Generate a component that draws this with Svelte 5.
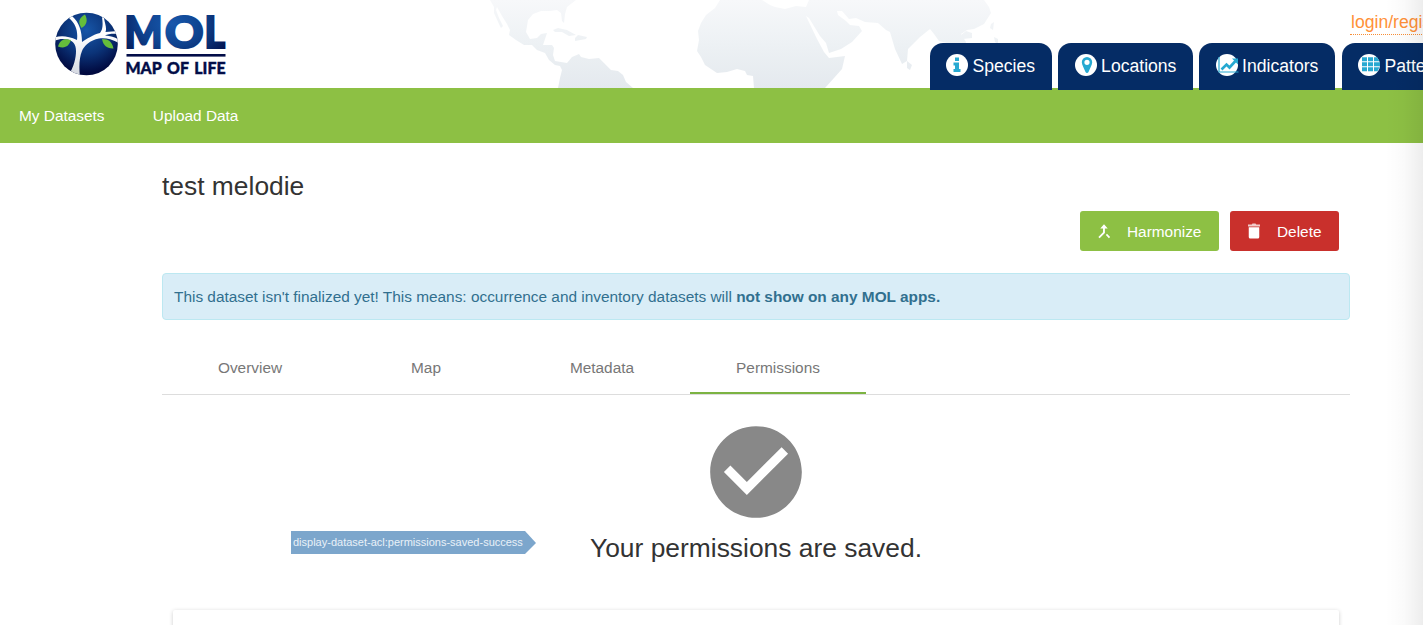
<script>
  const apps = [
    { name: 'Species', icon: 'info', width: 122, gap: 6, inset: 16 },
    { name: 'Locations', icon: 'pin', width: 135, gap: 6, inset: 16.6 },
    { name: 'Indicators', icon: 'chart', width: 136, gap: 7, inset: 16.6 },
    { name: 'Patterns', icon: 'grid', width: 125, gap: 0, inset: 16 }
  ];
  const tabs = ['Overview', 'Map', 'Metadata', 'Permissions'];
  let active = $state('Permissions');
</script>

<div class="page">
  <header>
    <svg class="world" width="520" height="88" viewBox="480 0 520 88" aria-hidden="true">
      <defs>
        <linearGradient id="land" gradientUnits="userSpaceOnUse" x1="0" y1="0" x2="0" y2="88">
          <stop offset="0" stop-color="#f7f8fa" />
          <stop offset=".5" stop-color="#edf1f4" />
          <stop offset="1" stop-color="#e4e9ee" />
        </linearGradient>
      </defs>
      <g fill="url(#land)">
        <path d="M490 0L494 7L494 13L499 24L501 28L503 26L499 18L496 10L497 7L502 16L507 24L510 30L509 35L516 40L524 45L532 45L537 50L545 53L549 60L555 65L560 66L562 70L560 78L558 88H633L626 82L623 75L618 71L611 70L604 63L599 58L589 59L581 57L579 54L572 57L567 63L561 62L555 61L553 55L554 48L552 45L543 45L547 33L541 34L537 38L530 39L526 32L528 20L533 14L541 11L550 11L557 10L561 13L562 21L564 23L565 14L567 7L576 0Z" />
        <path d="M553 30L558 28L567 30L576 35L569 36L562 32L555 32ZM575 38L578 35L587 37L586 39L575 41Z" />
        <path d="M720 0L715 8L706 15L701 23L698 31L699 40L697 51L701 57L705 65L717 73L727 72L737 69L745 71L747 75L753 76L754 88H825L834 78L842 69L845 56L829 58L824 52L817 39L806 16L809 18L820 36L826 43L829 53L841 49L852 42L862 31L859 26L850 25L846 21L838 15L837 11L842 11L849 19L856 18L865 22L878 23L886 30L890 32L895 49L902 64L907 61L908 49L920 37L930 29L934 34L939 41L947 43L958 50L964 50L966 42L961 34L967 30L974 29L984 24L991 13L989 7L984 0H809L806 7L796 6L785 9L775 7L770 5L762 0Z" />
        <path d="M907 61L912 65L910 70L907 68ZM961 35L966 31L972 33L972 38L963 39ZM991 24L994 22L993 30L990 28ZM994 37L998 39L998 44L995 42Z" />
      </g>
    </svg>

    <svg class="logo" width="178" height="70" viewBox="54 11 178 70" role="img" aria-label="MOL Map of Life">
      <defs>
        <radialGradient id="globe" cx=".5" cy=".28" r=".68">
          <stop offset="0" stop-color="#1756a8" />
          <stop offset=".55" stop-color="#0b3479" />
          <stop offset="1" stop-color="#010a40" />
        </radialGradient>
        <radialGradient id="letters" gradientUnits="userSpaceOnUse" cx="172" cy="24" r="66" gradientTransform="translate(0 7) scale(1 .7)">
          <stop offset="0" stop-color="#1758ad" />
          <stop offset=".5" stop-color="#0e408b" />
          <stop offset="1" stop-color="#02104b" />
        </radialGradient>
        <linearGradient id="bark" x1="0" y1="0" x2="0" y2="1">
          <stop offset=".3" stop-color="#fff" />
          <stop offset="1" stop-color="#d3d7e0" />
        </linearGradient>
        <clipPath id="disc"><circle cx="86.500" cy="44" r="31.300" /></clipPath>
      </defs>
      <circle cx="86.500" cy="44" r="31.300" fill="url(#globe)" />
      <g clip-path="url(#disc)">
        <path fill="url(#bark)" d="M68 76C74 67 76 58 76 51C76 44 73 41 68 39.500C63 38.500 59 38.500 54 41V37.500C60 35.500 68 35.500 77 40C78 31 76 24 69 18L72 16C79 22 82 31 82 42C87 39 92 35 100 33C103 29 103 24 102 17L104 18C105 24 107 28 105.500 32L119 31V34C112 33.500 108 34 105 35.500C111 36 116 37.500 119 40V43C112 39 105 37.500 99 38.500C90 40 84 46 82 51C79 58 79 68 80 77Z" />
      </g>
      <g fill="#65bd3b">
        <path d="M81.500 28C77.500 22 79 18 85 14.500C88 20 87 25 81.500 28Z" />
        <path d="M58 46.500C60 40 64 38 71 40C69 46 65 49 58 46.500Z" />
        <path d="M102 39C109 39 112 42 113.500 48.500C107 49 103 45 102 39Z" />
      </g>
      <g class="mol" fill="url(#letters)" stroke="url(#letters)">
        <text x="124.500" y="48" textLength="38" lengthAdjust="spacingAndGlyphs">M</text>
        <text x="165" y="48" textLength="38.500" lengthAdjust="spacingAndGlyphs">O</text>
        <text x="204.500" y="48" textLength="20.500" lengthAdjust="spacingAndGlyphs">L</text>
      </g>
      <rect x="126.500" y="54" width="99" height="2.600" fill="#020d48" />
      <text class="life" x="125.500" y="73.700" textLength="100" lengthAdjust="spacingAndGlyphs">MAP OF LIFE</text>
    </svg>

    <a class="login" href="#login">login/register</a>

    <nav class="apps">
      {#each apps as app}
        <a href="#{app.icon}" style="width: {app.width}px; margin-right: {app.gap}px; padding-left: {app.inset}px">
          <svg width="24" height="24" viewBox="0 0 24 24">
            <circle cx="11" cy="12" r="11" fill="#fff" />
            {#if app.icon === 'info'}
              <path fill="#27a9d1" d="M9 4.500h4v3.500H9zM7.500 9.500H13v6.500h1.500V19h-7v-3H9v-3.500H7.500z" />
            {:else if app.icon === 'pin'}
              <path fill="#27a9d1" fill-rule="evenodd" d="M12 4a5.200 5.200 0 0 0-5.200 5.200C6.800 12 9.500 16 10.500 19c.5 1.200 2.500 1.200 3 0 1-3 3.700-7 3.700-9.800A5.200 5.200 0 0 0 12 4zm0 2.700a2.600 2.600 0 1 1 0 5.200 2.600 2.600 0 0 1 0-5.200z" />
            {:else if app.icon === 'chart'}
              <path fill="none" stroke="#27a9d1" d="M3 4v15H22.500" stroke-width="1.200" />
              <path fill="none" stroke="#27a9d1" stroke-width="2.600" d="M5.500 16.500l5-5 3 3 6-6.500" />
              <path fill="#27a9d1" d="M16 5.500h6v6z" />
            {:else}
              <path fill="#27a9d1" d="M4 4.300h5v4H4zM10 4.300h5v4h-5zM16 4.300h3l2.500 4H16zM4 9.300h5v4H4zM10 9.300h5v4h-5zM16 9.300h6v4h-6zM4 14.300h5v4H4zM10 14.300h5v4h-5zM16 14.300h5.500l-2 4H16z" />
            {/if}
          </svg>
          <span>{app.name}</span>
        </a>
      {/each}
    </nav>
  </header>

  <nav class="menu">
    <a href="#datasets">My Datasets</a>
    <a href="#upload">Upload Data</a>
  </nav>

  <main>
    <h1>test melodie</h1>
    <div class="actions">
      <button class="harmonize">
        <svg width="18" height="18" viewBox="0 0 24 24"><path fill="#fff" d="M18.500 21.500L20.200 20 16 15.700 14.500 17.300zM7 8.500H10.700V13.500L4.500 20 6.200 21.500l7-7V8.500H17L12 3z" /></svg>
        <span>Harmonize</span>
      </button>
      <button class="delete">
        <svg width="18" height="18" viewBox="0 0 24 24"><path fill="#fff" d="M5 7h14V20a2 2 0 0 1-2 2H7a2 2 0 0 1-2-2z" /><path fill="#fff" opacity=".75" d="M4 3.300h5l1-1.300h4l1 1.300h5V6H4z" /></svg>
        <span>Delete</span>
      </button>
    </div>

    <div class="alert">This dataset isn't finalized yet! This means: occurrence and inventory datasets will <b>not show on any MOL apps.</b></div>

    <div class="tabs" role="tablist">
      {#each tabs as tab}
        <button role="tab" aria-selected={active === tab} class:active={active === tab} onclick={() => (active = tab)}>{tab}</button>
      {/each}
    </div>

    <section class="saved">
      <svg width="110" height="110" viewBox="0 0 24 24"><path fill="#888" d="M12 2C6.480 2 2 6.480 2 12s4.480 10 10 10 10-4.480 10-10S17.520 2 12 2zm-2 15l-5-5 1.410-1.410L10 14.170l7.590-7.590L19 8l-9 9z" /></svg>
      <h2>Your permissions are saved.</h2>
      <div class="key"><span>display-dataset-acl:permissions-saved-success</span></div>
    </section>

    <div class="card"></div>
  </main>

  <div class="edge"></div>
</div>

<style>
  :global(body) { overflow: hidden; }
  .page {
    position: relative;
    width: 1423px;
    height: 625px;
    overflow: hidden;
    background: #fff;
    color: #333;
    font-family: "Liberation Sans", Arial, sans-serif;
    font-size: 15.4px;
  }
  a { color: inherit; text-decoration: none; }
  svg { display: block; flex: none; }
  header { position: relative; height: 88px; }
  .world { position: absolute; left: 480px; top: 0; }
  .logo { position: absolute; left: 54px; top: 11px; }
  .mol { font: 900 44px Lato, sans-serif; stroke-width: 2.200px; stroke-miterlimit: 2; }
  .life { font: 900 16px Lato, sans-serif; fill: #020d48; stroke: #020d48; stroke-width: .4px; word-spacing: 2px; }
  .login {
    position: absolute;
    left: 1350px;
    top: 11px;
    padding-left: 1px;
    height: 23px;
    line-height: 22px;
    border-bottom: 1px dotted #f78e36;
    color: #ff9138;
    font-size: 17.6px;
    white-space: nowrap;
  }
  .apps {
    position: absolute;
    z-index: 1;
    left: 930px;
    top: 43px;
    display: flex;
  }
  .apps a {
    box-sizing: border-box;
    display: flex;
    flex: none;
    height: 47px;
    padding-top: 10px;
    border-radius: 13px 13px 0 0;
    background: #052c65;
    color: #fff;
    font-size: 17.6px;
  }
  .apps span { margin-left: 2.500px; line-height: 26px; }
  .menu {
    display: flex;
    gap: 48.300px;
    height: 55px;
    padding-left: 19px;
    background: #8dc044;
    color: #fff;
    line-height: 55px;
  }
  main { width: 1188px; margin-left: 162px; }
  h1, h2 { margin: 0; font-size: 26.4px; font-weight: 400; line-height: 30px; }
  h1 { padding-top: 28px; }
  .actions { display: flex; justify-content: flex-end; gap: 11px; padding: 10px 11px 0 0; }
  button { border: 0; padding: 0; background: none; font: inherit; }
  .actions button {
    display: flex;
    align-items: center;
    box-sizing: border-box;
    height: 40px;
    padding-left: 15px;
    border-radius: 3px;
    color: #fff;
  }
  .actions span { margin: 1px 0 0 14px; }
  .harmonize { width: 139px; background: #8dc044; }
  .delete { width: 109px; background: #c9302c; }
  .alert {
    box-sizing: border-box;
    height: 47px;
    margin-top: 22px;
    padding-left: 11px;
    border: 1px solid #bce8f1;
    border-radius: 4px;
    background: #d9edf7;
    color: #31708f;
    line-height: 45px;
  }
  .tabs { display: flex; height: 52px; margin-top: 22px; border-bottom: 1px solid #ddd; }
  .tabs button { box-sizing: border-box; width: 176px; height: 52px; padding-top: 2px; color: #777; border-bottom: 2px solid transparent; }
  .tabs .active { border-color: #7cb342; }
  .saved { position: relative; display: flex; flex-direction: column; align-items: center; height: 215px; padding-top: 22px; box-sizing: border-box; }
  .saved h2 { margin-top: 6px; }
  .key {
    position: absolute;
    left: 129px;
    top: 136px;
    width: 245px;
    height: 23px;
    box-sizing: border-box;
    padding-left: 2px;
    background: #7ca6cc;
    clip-path: polygon(0 0, 234px 0, 245px 12px, 234px 100%, 0 100%);
    color: #e9f1f8;
    font-size: 11px;
    line-height: 23px;
    white-space: nowrap;
  }
  .card { height: 80px; margin: 0 11px; border-radius: 2px; box-shadow: 0 1px 4px rgba(0, 0, 0, .2); }
  .edge {
    position: absolute;
    z-index: 2;
    top: 0;
    right: 0;
    width: 38px;
    height: 625px;
    background: linear-gradient(to right, transparent, rgba(0, 0, 0, .018) 50%, rgba(0, 0, 0, .07));
    pointer-events: none;
  }
</style>
